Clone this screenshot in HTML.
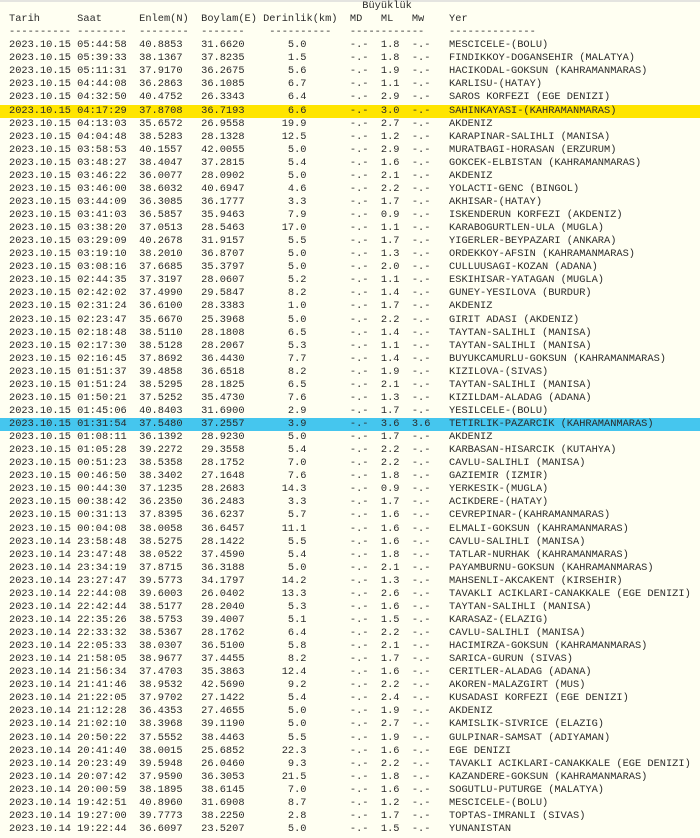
<!DOCTYPE html>
<html><head><meta charset="utf-8"><style>
html,body{margin:0;padding:0;background:#fffff2;width:700px;height:838px;overflow:hidden}
.top{position:absolute;left:0;top:0;width:700px;height:2px;background:#e4e4e0}
.w{position:absolute;left:9px;top:0px;right:0}
.w div{white-space:pre;font-family:"Liberation Mono",monospace;font-size:10.33px;line-height:13.07px;height:13.07px;color:#2a2a2a}
.y{background:#ffe500;margin-left:-9px;padding-left:9px}
.b{background:#45c6ee;margin-left:-9px;padding-left:9px}
</style></head><body><div class="top"></div><div class="w">
<div>                                                         Büyüklük</div>
<div>Tarih      Saat      Enlem(N)  Boylam(E) Derinlik(km)  MD   ML   Mw    Yer</div>
<div>---------- --------  --------  -------    ----------   ------------    --------------</div>
<div>2023.10.15 05:44:58  40.8853   31.6620       5.0       -.-  1.8  -.-   MESCICELE-(BOLU)</div>
<div>2023.10.15 05:39:33  38.1367   37.8235       1.5       -.-  1.8  -.-   FINDIKKOY-DOGANSEHIR (MALATYA)</div>
<div>2023.10.15 05:11:31  37.9170   36.2675       5.6       -.-  1.9  -.-   HACIKODAL-GOKSUN (KAHRAMANMARAS)</div>
<div>2023.10.15 04:44:08  36.2863   36.1085       6.7       -.-  1.1  -.-   KARLISU-(HATAY)</div>
<div>2023.10.15 04:32:50  40.4752   26.3343       6.4       -.-  2.9  -.-   SAROS KORFEZI (EGE DENIZI)</div>
<div class="y">2023.10.15 04:17:29  37.8708   36.7193       6.6       -.-  3.0  -.-   SAHINKAYASI-(KAHRAMANMARAS)</div>
<div>2023.10.15 04:13:03  35.6572   26.9558      19.9       -.-  2.7  -.-   AKDENIZ</div>
<div>2023.10.15 04:04:48  38.5283   28.1328      12.5       -.-  1.2  -.-   KARAPINAR-SALIHLI (MANISA)</div>
<div>2023.10.15 03:58:53  40.1557   42.0055       5.0       -.-  2.9  -.-   MURATBAGI-HORASAN (ERZURUM)</div>
<div>2023.10.15 03:48:27  38.4047   37.2815       5.4       -.-  1.6  -.-   GOKCEK-ELBISTAN (KAHRAMANMARAS)</div>
<div>2023.10.15 03:46:22  36.0077   28.0902       5.0       -.-  2.1  -.-   AKDENIZ</div>
<div>2023.10.15 03:46:00  38.6032   40.6947       4.6       -.-  2.2  -.-   YOLACTI-GENC (BINGOL)</div>
<div>2023.10.15 03:44:09  36.3085   36.1777       3.3       -.-  1.7  -.-   AKHISAR-(HATAY)</div>
<div>2023.10.15 03:41:03  36.5857   35.9463       7.9       -.-  0.9  -.-   ISKENDERUN KORFEZI (AKDENIZ)</div>
<div>2023.10.15 03:38:20  37.0513   28.5463      17.0       -.-  1.1  -.-   KARABOGURTLEN-ULA (MUGLA)</div>
<div>2023.10.15 03:29:09  40.2678   31.9157       5.5       -.-  1.7  -.-   YIGERLER-BEYPAZARI (ANKARA)</div>
<div>2023.10.15 03:19:10  38.2010   36.8707       5.0       -.-  1.3  -.-   ORDEKKOY-AFSIN (KAHRAMANMARAS)</div>
<div>2023.10.15 03:08:16  37.6685   35.3797       5.0       -.-  2.0  -.-   CULLUUSAGI-KOZAN (ADANA)</div>
<div>2023.10.15 02:44:35  37.3197   28.0607       5.2       -.-  1.1  -.-   ESKIHISAR-YATAGAN (MUGLA)</div>
<div>2023.10.15 02:42:02  37.4990   29.5847       8.2       -.-  1.4  -.-   GUNEY-YESILOVA (BURDUR)</div>
<div>2023.10.15 02:31:24  36.6100   28.3383       1.0       -.-  1.7  -.-   AKDENIZ</div>
<div>2023.10.15 02:23:47  35.6670   25.3968       5.0       -.-  2.2  -.-   GIRIT ADASI (AKDENIZ)</div>
<div>2023.10.15 02:18:48  38.5110   28.1808       6.5       -.-  1.4  -.-   TAYTAN-SALIHLI (MANISA)</div>
<div>2023.10.15 02:17:30  38.5128   28.2067       5.3       -.-  1.1  -.-   TAYTAN-SALIHLI (MANISA)</div>
<div>2023.10.15 02:16:45  37.8692   36.4430       7.7       -.-  1.4  -.-   BUYUKCAMURLU-GOKSUN (KAHRAMANMARAS)</div>
<div>2023.10.15 01:51:37  39.4858   36.6518       8.2       -.-  1.9  -.-   KIZILOVA-(SIVAS)</div>
<div>2023.10.15 01:51:24  38.5295   28.1825       6.5       -.-  2.1  -.-   TAYTAN-SALIHLI (MANISA)</div>
<div>2023.10.15 01:50:21  37.5252   35.4730       7.6       -.-  1.3  -.-   KIZILDAM-ALADAG (ADANA)</div>
<div>2023.10.15 01:45:06  40.8403   31.6900       2.9       -.-  1.7  -.-   YESILCELE-(BOLU)</div>
<div class="b">2023.10.15 01:31:54  37.5480   37.2557       3.9       -.-  3.6  3.6   TETIRLIK-PAZARCIK (KAHRAMANMARAS)</div>
<div>2023.10.15 01:08:11  36.1392   28.9230       5.0       -.-  1.7  -.-   AKDENIZ</div>
<div>2023.10.15 01:05:28  39.2272   29.3558       5.4       -.-  2.2  -.-   KARBASAN-HISARCIK (KUTAHYA)</div>
<div>2023.10.15 00:51:23  38.5358   28.1752       7.0       -.-  2.2  -.-   CAVLU-SALIHLI (MANISA)</div>
<div>2023.10.15 00:46:50  38.3402   27.1648       7.6       -.-  1.8  -.-   GAZIEMIR (IZMIR)</div>
<div>2023.10.15 00:44:30  37.1235   28.2683      14.3       -.-  0.9  -.-   YERKESIK-(MUGLA)</div>
<div>2023.10.15 00:38:42  36.2350   36.2483       3.3       -.-  1.7  -.-   ACIKDERE-(HATAY)</div>
<div>2023.10.15 00:31:13  37.8395   36.6237       5.7       -.-  1.6  -.-   CEVREPINAR-(KAHRAMANMARAS)</div>
<div>2023.10.15 00:04:08  38.0058   36.6457      11.1       -.-  1.6  -.-   ELMALI-GOKSUN (KAHRAMANMARAS)</div>
<div>2023.10.14 23:58:48  38.5275   28.1422       5.5       -.-  1.6  -.-   CAVLU-SALIHLI (MANISA)</div>
<div>2023.10.14 23:47:48  38.0522   37.4590       5.4       -.-  1.8  -.-   TATLAR-NURHAK (KAHRAMANMARAS)</div>
<div>2023.10.14 23:34:19  37.8715   36.3188       5.0       -.-  2.1  -.-   PAYAMBURNU-GOKSUN (KAHRAMANMARAS)</div>
<div>2023.10.14 23:27:47  39.5773   34.1797      14.2       -.-  1.3  -.-   MAHSENLI-AKCAKENT (KIRSEHIR)</div>
<div>2023.10.14 22:44:08  39.6003   26.0402      13.3       -.-  2.6  -.-   TAVAKLI ACIKLARI-CANAKKALE (EGE DENIZI)</div>
<div>2023.10.14 22:42:44  38.5177   28.2040       5.3       -.-  1.6  -.-   TAYTAN-SALIHLI (MANISA)</div>
<div>2023.10.14 22:35:26  38.5753   39.4007       5.1       -.-  1.5  -.-   KARASAZ-(ELAZIG)</div>
<div>2023.10.14 22:33:32  38.5367   28.1762       6.4       -.-  2.2  -.-   CAVLU-SALIHLI (MANISA)</div>
<div>2023.10.14 22:05:33  38.0307   36.5100       5.8       -.-  2.1  -.-   HACIMIRZA-GOKSUN (KAHRAMANMARAS)</div>
<div>2023.10.14 21:58:05  38.9677   37.4455       8.2       -.-  1.7  -.-   SARICA-GURUN (SIVAS)</div>
<div>2023.10.14 21:56:34  37.4703   35.3863      12.4       -.-  1.6  -.-   CERITLER-ALADAG (ADANA)</div>
<div>2023.10.14 21:41:46  38.9532   42.5690       9.2       -.-  2.2  -.-   AKOREN-MALAZGIRT (MUS)</div>
<div>2023.10.14 21:22:05  37.9702   27.1422       5.4       -.-  2.4  -.-   KUSADASI KORFEZI (EGE DENIZI)</div>
<div>2023.10.14 21:12:28  36.4353   27.4655       5.0       -.-  1.9  -.-   AKDENIZ</div>
<div>2023.10.14 21:02:10  38.3968   39.1190       5.0       -.-  2.7  -.-   KAMISLIK-SIVRICE (ELAZIG)</div>
<div>2023.10.14 20:50:22  37.5552   38.4463       5.5       -.-  1.9  -.-   GULPINAR-SAMSAT (ADIYAMAN)</div>
<div>2023.10.14 20:41:40  38.0015   25.6852      22.3       -.-  1.6  -.-   EGE DENIZI</div>
<div>2023.10.14 20:23:49  39.5948   26.0460       9.3       -.-  2.2  -.-   TAVAKLI ACIKLARI-CANAKKALE (EGE DENIZI)</div>
<div>2023.10.14 20:07:42  37.9590   36.3053      21.5       -.-  1.8  -.-   KAZANDERE-GOKSUN (KAHRAMANMARAS)</div>
<div>2023.10.14 20:00:59  38.1895   38.6145       7.0       -.-  1.6  -.-   SOGUTLU-PUTURGE (MALATYA)</div>
<div>2023.10.14 19:42:51  40.8960   31.6908       8.7       -.-  1.2  -.-   MESCICELE-(BOLU)</div>
<div>2023.10.14 19:27:00  39.7773   38.2250       2.8       -.-  1.7  -.-   TOPTAS-IMRANLI (SIVAS)</div>
<div>2023.10.14 19:22:44  36.6097   23.5207       5.0       -.-  1.5  -.-   YUNANISTAN</div>
</div></body></html>
